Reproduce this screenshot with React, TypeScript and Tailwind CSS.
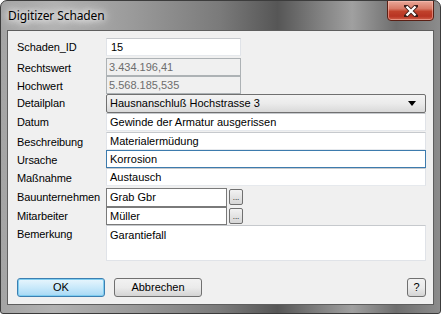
import React from "react";

const font = { fontFamily: '"Liberation Sans", Arial, sans-serif' };

function Label({ children, className = "" }: { children: React.ReactNode; className?: string }) {
  return (
    <div className={"w-[89px] shrink-0 text-[11px] tracking-[-0.1px] text-black leading-none " + className}>
      {children}
    </div>
  );
}

function TextBox({ value, w, className = "" }: { value: string; w: string; className?: string }) {
  return (
    <div
      className={
        "h-full flex items-center pl-[3px] bg-white border border-t-[#c6c9cd] border-l-[#e0e3e8] border-r-[#e0e3e8] border-b-[#e6e9ed] text-[11px] text-black tracking-[0px] " +
        w +
        " " +
        className
      }
    >
      {value}
    </div>
  );
}

function DisabledBox({ value }: { value: string }) {
  return (
    <div className="h-full w-[135px] flex items-center pl-[2px] bg-[#f0f0f0] border border-[#adb2b5] text-[11px] text-[#6d6d6d] tracking-[0px]">
      {value}
    </div>
  );
}

function DotsButton() {
  return (
    <div className="ml-[2px] mt-[1px] w-[14px] h-[16px] rounded-[2px] border border-[#707070] bg-gradient-to-b from-[#f2f2f2] to-[#d6d6d6] flex items-end justify-center pb-[2px]">
      <span className="text-[8px] leading-none text-black tracking-[0px]">...</span>
    </div>
  );
}

export default function App() {
  return (
    <div
      className="w-[441px] h-[314px] relative rounded-t-[7px] rounded-b-[3px] border border-[#3c3c3c] overflow-hidden flex flex-col"
      style={{
        ...font,
        background:
          "linear-gradient(90deg,#a4a4a4 0%,#b2b2b2 12%,#9a9a9a 30%,#7a7a7a 50%,#565656 63%,#7e7e7e 72%,#a0a0a0 80%,#6e6e6e 90%,#8c8c8c 100%)",
      }}
    >
      {/* title bar */}
      <div className="h-[29px] shrink-0 flex items-center pl-[7px]">
        <span
          className="text-[12px] text-black"
          style={{
            fontFamily: '"Noto Sans", "Open Sans", sans-serif',
            textShadow: "0 0 6px #ffffff, 0 0 10px #ffffff, 0 0 14px #ffffff",
            letterSpacing: "-0.1px",
          }}
        >
          Digitizer Schaden
        </span>
      </div>
      <div
        className="absolute left-[386px] top-[-1px] w-[47px] h-[21px] rounded-b-[4px] border border-[#5a1f14] flex items-center justify-center"
        style={{
          background: "linear-gradient(180deg,#e9a899 0%,#d87a67 40%,#c0412b 55%,#b83423 80%,#d0604a 100%)",
          boxShadow: "inset 0 0 0 1px rgba(255,200,190,0.5)",
        }}
      >
        <svg width="14" height="12" viewBox="0 0 14 12">
          <path
            d="M2 1 L12 11 M12 1 L2 11"
            stroke="#3b1c18"
            strokeWidth="4"
            strokeLinecap="square"
            fill="none"
          />
          <path d="M2.5 1.5 L11.5 10.5 M11.5 1.5 L2.5 10.5" stroke="#ffffff" strokeWidth="2.4" fill="none" />
        </svg>
      </div>

      {/* panel */}
      <div className="mx-[6px] h-[275px] shrink-0 border border-[#5e5e5e] bg-[#f0f0f0] flex flex-col pl-[9px] pr-[7px]">
        <div className="flex items-center h-[18px] mt-[7px]">
          <Label>Schaden_ID</Label>
          <TextBox value="15" w="w-[135px]" className="pl-[4px]" />
        </div>
        <div className="flex items-center h-[18px] mt-[2px]">
          <Label className="mt-[2px]">Rechtswert</Label>
          <DisabledBox value="3.434.196,41" />
        </div>
        <div className="flex items-center h-[18px]">
          <Label className="mt-[2px]">Hochwert</Label>
          <DisabledBox value="5.568.185,535" />
        </div>
        <div className="flex items-center h-[19px]">
          <Label>Detailplan</Label>
          <div className="h-full w-[320px] flex items-center justify-between pl-[3px] pr-[9px] rounded-[2px] border border-[#707070] bg-gradient-to-b from-[#f3f3f3] via-[#ebebeb] to-[#d9d9d9] text-[11px] tracking-[0px] text-black">
            <span>Hausnanschluß Hochstrasse 3</span>
            <svg width="8" height="5" viewBox="0 0 8 5">
              <path d="M0 0 H8 L4 5 Z" fill="#000" />
            </svg>
          </div>
        </div>
        <div className="flex items-center h-[18px]">
          <Label>Datum</Label>
          <TextBox value="Gewinde der Armatur ausgerissen" w="w-[320px]" />
        </div>
        <div className="flex items-center h-[18px] mt-[1px]">
          <Label className="mt-[3px]">Beschreibung</Label>
          <TextBox value="Materialermüdung" w="w-[320px]" />
        </div>
        <div className="flex items-center h-[18px]">
          <Label className="mt-[3px]">Ursache</Label>
          <TextBox value="Korrosion" w="w-[320px]" className="!border-[#3d7bad] !border-t-[#3d7bad]" />
        </div>
        <div className="flex items-center h-[18px]">
          <Label className="mt-[2px]">Maßnahme</Label>
          <TextBox value="Austausch" w="w-[320px]" />
        </div>
        <div className="flex items-start h-[19px] mt-[2px]">
          <Label className="self-center">Bauunternehmen</Label>
          <div className="h-full w-[121px] flex items-center pl-[3px] bg-white border border-[#7a7a7a] text-[11px] tracking-[0px] text-black">
            Grab Gbr
          </div>
          <DotsButton />
        </div>
        <div className="flex items-start h-[18px]">
          <Label className="self-center mt-[1px]">Mitarbeiter</Label>
          <div className="h-full w-[121px] flex items-center pl-[3px] bg-white border border-[#7a7a7a] text-[11px] tracking-[0px] text-black">
            Müller
          </div>
          <DotsButton />
        </div>
        <div className="flex items-start h-[36px]">
          <Label className="mt-[4px]">Bemerkung</Label>
          <div className="h-full w-[320px] pl-[3px] pt-[4px] bg-white border border-[#e0e3e8] border-t-[#c6c9cd] text-[11px] tracking-[0px] text-black leading-none">
            Garantiefall
          </div>
        </div>
        <div className="flex items-center h-[19px] mt-[17px]">
          <div className="w-[88px] h-full flex items-center justify-center rounded-[3px] border border-[#3c7fb1] bg-gradient-to-b from-[#e8f6fd] via-[#c9e9fa] to-[#a7d9f5] text-[11px] text-black shadow-[inset_0_0_0_1px_#7fcdf0]">
            OK
          </div>
          <div className="ml-[9px] w-[88px] h-full flex items-center justify-center rounded-[3px] border border-[#707070] bg-gradient-to-b from-[#f2f2f2] via-[#ebebeb] to-[#d4d4d4] text-[11px] text-black">
            Abbrechen
          </div>
          <div className="ml-auto w-[19px] h-full flex items-center justify-center rounded-[3px] border border-[#707070] bg-gradient-to-b from-[#f2f2f2] via-[#ebebeb] to-[#d4d4d4] text-[11px] text-black">
            ?
          </div>
        </div>
      </div>
    </div>
  );
}
